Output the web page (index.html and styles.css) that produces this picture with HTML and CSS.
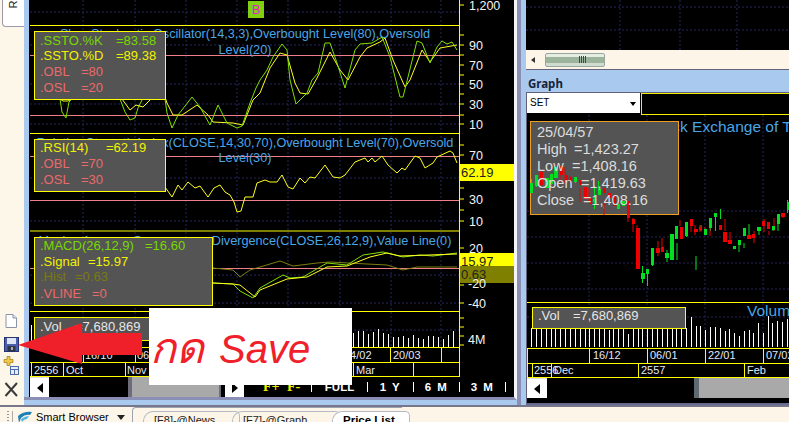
FILE: index.html
```html
<!DOCTYPE html>
<html lang="th">
<head>
<meta charset="utf-8">
<title>Smart Portal</title>
<link rel="stylesheet" href="styles.css">
</head>
<body>
<div class="app">
  <div class="main">
    <aside class="toolbar">
      <div class="side-tab"><span>R</span></div>
      <div class="tools">
        <svg class="tool" width="24" height="90" viewBox="0 0 24 90">
          <path d="M6 4.5H13L16.500 8V17.500H6Z" fill="#fff" stroke="#8a93a8"/>
          <path d="M13 4.500V8H16.500" fill="#dfe5f0" stroke="#8a93a8"/>
          <rect x="4.500" y="27.500" width="14" height="14" fill="#4a5fb0" stroke="#27336e"/>
          <rect x="7" y="28" width="9" height="6" fill="#dfe4f4"/>
          <rect x="7.500" y="36" width="8" height="5" fill="#30363f"/>
          <rect x="11" y="37" width="2" height="3" fill="#aab"/>
          <path d="M4 49.500h3v-3h3v3h3v3h-3v3h-3v-3h-3z" fill="#f2c84a" stroke="#a07a10" stroke-width=".7"/>
          <rect x="10.500" y="56.500" width="8" height="8" fill="#e8eef8" stroke="#4c6da8"/>
          <path d="M11 59.500h7M14.500 60v4" stroke="#4c6da8"/>
          <path d="M5.500 73L17 86M17 73L5.500 86" stroke="#3a3a3a" stroke-width="2"/>
        </svg>
      </div>
    </aside>

    <section class="window-left">
      <svg class="chart-left" viewBox="30 0 484 377" width="484" height="377">
        <g class="grid">
          <path d="M83 0V347M135 0V347M186 0V347M237 0V347M288 0V347M340 0V347M391 0V347M441 0V347"/>
          <path d="M30 12H459M30 45H459M30 84H459M30 104H459M30 124H459M30 178H459M30 221H459M30 275H459M30 303H459M30 330H459"/>
        </g>
        <rect class="signal" x="248" y="1" width="16" height="17"/>
        <text class="signal-b" x="256" y="14">B</text>

        <path class="ax" d="M30 25.500H459M30 133.500H459M30 231H459M30 311.500H459M30 347.500H459M30 362.500H459M30 376.500H459"/>
        <path class="ax" d="M459.500 0V377M83.500 347V362M135.500 347V362M186.500 347V362M237.500 347V362M288.500 347V362M340.500 347V362M390.500 347V362M441.500 347V362M31.500 362V377M63.500 362V377M125.500 362V377M353.500 362V377M413.500 362V377"/>
        <path class="ax" d="M459 5h5M459 35h5M459 45h5M459 55h5M459 65h5M459 75h5M459 84h5M459 94h5M459 104h5M459 115h5M459 124h5M459 145h5M459 155h5M459 166h5M459 177h5M459 188h5M459 199h5M459 210h5M459 221h5M459 248h5M459 285h5M459 303h5M459 318h5M459 327h5M459 336h5M459 345h5"/>

        <path class="pink" d="M30 55.500H459M30 115.500H459M30 156.500H459M30 200.500H459M30 268.500H459"/>

        <text class="title" x="245" y="38">Slow Stochastic Oscillator(14,3,3),Overbought Level(80),Oversold</text>
        <text class="title" x="245" y="54">Level(20)</text>
        <text class="title" x="245" y="147">Relative Strength Index(CLOSE,14,30,70),Overbought Level(70),Oversold</text>
        <text class="title" x="245" y="162">Level(30)</text>
        <text class="title" x="245" y="245">Moving Average Convergence Divergence(CLOSE,26,12,9),Value Line(0)</text>

        <polyline class="line-y" points="165,97 167,103 173,115 182,115 197,105 208,115 213,122 233,123 243,125 253,100 260,93 270,68 280,53 287,55 295,83 300,93 308,94 317,78 330,52 340,70 348,80 360,57 367,48 380,42 385,38 393,60 405,87 410,80 422,50 430,62 440,48 457,45"/>
        <polyline class="line-g" points="165,99 167,113 172,128 178,115 192,97 200,107 210,125 218,105 227,123 237,128 242,126 250,103 256,88 260,80 267,70 273,57 282,44 287,50 290,80 296,104 307,93 312,80 318,73 325,43 330,43 337,63 345,88 355,50 360,44 372,43 382,37 390,57 400,97 403,97 417,41 422,43 430,63 437,47 442,41 447,44 452,42 457,50"/>
        <polyline class="line-y" points="60,99 63,101 68,101 72,99"/>
        <polyline class="line-g" points="60,99 62,112 66,118 69,102 72,99"/>
        <polyline class="line-g" points="120,99 125,112 130,120 135,118 138,108 142,100"/>
        <polyline class="line-y" points="122,99 130,110 136,105 143,107 150,100"/>

        <polyline class="line-y" points="165,187 172,197 178,185 182,190 188,182 195,188 200,186 208,197 214,188 220,185 225,192 230,195 234,202 237,212 241,211 245,197 253,197 257,183 265,180 270,182 277,182 282,175 288,187 293,189 300,178 305,183 310,177 315,178 325,165 333,177 340,178 345,175 355,162 365,158 368,162 372,158 375,162 382,156 388,165 397,173 402,168 405,170 415,156 420,158 425,168 433,163 437,157 450,151 453,153 457,163"/>

        <polyline class="line-o" points="213,268 233,270 240,277 250,270 260,267 280,261 293,266 317,263 330,262 367,264 387,265 403,270 417,267 437,267 457,267"/>
        <polyline class="line-g" points="213,283 233,284 240,291 253,298 260,288 283,275 290,278 303,277 327,263 347,265 363,255 383,252 403,257 420,255 433,256 457,253"/>
        <polyline class="line-y" points="213,283 233,284 240,285 255,297 260,290 287,279 307,277 327,267 347,266 370,257 387,253 400,256 457,254"/>

        <path class="bars" d="M353.500 347V333M358.500 347V331M363.500 347V331M368.500 347V334M373.500 347V332M378.500 347V329M383.500 347V333M388.500 347V334M393.500 347V337M398.500 347V337M403.500 347V336M408.500 347V338M413.500 347V335M418.500 347V338M423.500 347V339M428.500 347V336M433.500 347V336M438.500 347V337M443.500 347V339M448.500 347V335M453.500 347V331"/>
        <path class="bars" d="M31.500 347V325"/>

        <rect class="price-y" x="460" y="164" width="54" height="17"/>
        <rect class="price-y" x="460" y="253" width="54" height="13"/>
        <rect class="price-o" x="460" y="266" width="54" height="17"/>
        <g class="axis-num">
          <text x="469" y="10">1,200</text>
          <text x="469" y="50">90</text><text x="469" y="70">70</text><text x="469" y="89">50</text>
          <text x="469" y="109">30</text><text x="469" y="129">10</text><text x="469" y="160">70</text>
          <text x="469" y="204">30</text><text x="469" y="226">10</text><text x="469" y="253">20</text>
          <text x="468" y="288">-20</text><text x="468" y="308">-40</text><text x="468" y="344">4M</text>
        </g>
        <g class="axis-dark">
          <text x="461" y="177">62.19</text><text x="461" y="266">15.97</text><text x="461" y="279">0.63</text>
        </g>

        <g class="x-labels">
          <text x="85" y="359">16/10</text><text x="137" y="359">06/11</text>
          <text x="344" y="359">04/02</text><text x="393" y="359">20/03</text>
          <text x="34" y="374">2556</text><text x="66" y="374">Oct</text><text x="127" y="374">Nov</text><text x="356" y="374">Mar</text>
        </g>

        <g class="tip">
          <rect x="34.500" y="31.500" width="131" height="68"/>
          <text class="c-g" x="40" y="45">.SSTO.%K</text><text class="c-g" x="116" y="45">=83.58</text>
          <text class="c-y" x="40" y="60">.SSTO.%D</text><text class="c-y" x="116" y="60">=89.38</text>
          <text class="c-r" x="40" y="76">.OBL</text><text class="c-r" x="81" y="76">=80</text>
          <text class="c-r" x="40" y="92">.OSL</text><text class="c-r" x="81" y="92">=20</text>
        </g>
        <g class="tip">
          <rect x="34.500" y="139.500" width="131" height="52"/>
          <text class="c-y" x="40" y="152">.RSI(14)</text><text class="c-y" x="106" y="152">=62.19</text>
          <text class="c-r" x="40" y="168">.OBL</text><text class="c-r" x="81" y="168">=70</text>
          <text class="c-r" x="40" y="184">.OSL</text><text class="c-r" x="81" y="184">=30</text>
        </g>
        <g class="tip">
          <rect x="34.500" y="237.500" width="178" height="68"/>
          <text class="c-g" x="40" y="250">.MACD(26,12,9)</text><text class="c-g" x="145" y="250">=16.60</text>
          <text class="c-y" x="40" y="266">.Signal</text><text class="c-y" x="88" y="266">=15.97</text>
          <text class="c-o" x="40" y="281">.Hist</text><text class="c-o" x="75" y="281">=0.63</text>
          <text class="c-r" x="40" y="298">.VLINE</text><text class="c-r" x="92" y="298">=0</text>
        </g>
        <g class="tip">
          <rect x="34.500" y="317.500" width="131" height="23"/>
          <text class="c-w" x="40" y="331">.Vol</text><text class="c-w" x="75" y="331">=7,680,869</text>
        </g>
      </svg>
      <div class="scroll-left">
        <span class="sb-btn"><i class="arrow-l"></i></span>
        <span class="sb-track"></span>
        <span class="sb-thumb"></span>
        <span class="sb-gap"></span>
        <span class="sb-btn"><i class="arrow-r"></i></span>
        <nav class="range">
          <b class="zoom">F+</b><b class="zoom">F-</b><u></u>
          <span class="range-full">FULL</span><u></u><span>1 Y</span><u></u><span>6 M</span><u></u><span>3 M</span><u></u>
        </nav>
      </div>
    </section>

    <section class="col-right">
      <div class="win-top">
        <svg class="top-grid" viewBox="526 0 263 50" width="263" height="50">
          <g class="grid"><path d="M620 0V50M680 0V50M737 0V50M526 7H789M526 30H789"/></g>
        </svg>
        <div class="scroll-top">
          <i class="arrow-small"></i>
          <span class="thumb-top"><em></em></span>
        </div>
      </div>
      <div class="win-graph">
        <h2 class="graph-title">Graph</h2>
        <div class="graph-frame">
          <div class="graph-head">
            <div class="combo">SET<i></i></div>
            <div class="graph-empty"></div>
          </div>
          <svg class="chart-right" viewBox="527 115 262 263" width="262" height="263">
            <g class="grid">
              <path d="M589 115V347M647 115V347M705 115V347M763 115V347"/>
              <path d="M527 211H789M527 237H789M527 263H789M527 289H789M527 317H789"/>
            </g>
            <text class="title-big" x="618" y="132">The Stock Exchange of Thailand</text>
            <text class="title-big" x="747" y="316">Volume</text>
            <g class="tip tip-or">
              <rect x="530.500" y="121.500" width="148" height="93"/>
            </g>
            <path class="wick-g" d="M531.500 179V193M536.500 175V187M546.500 178V188M551.500 174V185M555.500 167V178M575.500 177V183M594.500 186V209M598.500 181V191M603.500 206V209M642.500 266V283M647.500 269V286M652.500 248V266M667 250V262M677 243V260M686.500 223V237M696 256V270M701 225V231M710.500 226V231M715.500 215V231M720.500 209V219M739 243V252M744 243V248M749 224V237M759 228V235M773 227V231M778 223V231M787.500 200V213"/>
            <path class="wick-r" d="M541 170V186M561 172V182M565 167V183M570 176V183M580 188V202M589 188V202M604 200V215M628 201V222M633 218V232M637 225V235M658 241V256M662 238V252M680 220V226M691 219V232M695 225V235M700 225V232M705 227V232M710 220V236M725 219V231M730 232V242M754 231V243M764 219V232M769 231V235M774 218V231M783 214V218"/>
            <g class="up">
              <rect x="530" y="183" width="3" height="10"/><rect x="535" y="175" width="3" height="11"/><rect x="545" y="178" width="4" height="10"/><rect x="550" y="174" width="3" height="10"/><rect x="554" y="167" width="4" height="11"/><rect x="574" y="177" width="3" height="5"/><rect x="593" y="199" width="3" height="3"/><rect x="598" y="189" width="3" height="6"/>
              <rect x="617" y="204" width="3" height="5"/><rect x="622" y="201" width="3" height="5"/>
              <rect x="641" y="273" width="4" height="6"/><rect x="646" y="269" width="3" height="5"/><rect x="651" y="248" width="3" height="17"/><rect x="665" y="253" width="4" height="5"/><rect x="670" y="234" width="4" height="26"/><rect x="675" y="226" width="3" height="13"/><rect x="685" y="222" width="3" height="14"/><rect x="704" y="229" width="3" height="6"/><rect x="709" y="218" width="3" height="10"/><rect x="714" y="213" width="3" height="4"/><rect x="733" y="246" width="3" height="3"/><rect x="738" y="240" width="3" height="5"/><rect x="743" y="228" width="3" height="8"/><rect x="757" y="227" width="4" height="4"/><rect x="772" y="226" width="3" height="4"/><rect x="777" y="214" width="3" height="10"/><rect x="787" y="202" width="2" height="8"/>
            </g>
            <g class="down">
              <rect x="540" y="172" width="3" height="13"/><rect x="560" y="166" width="3" height="9"/><rect x="565" y="175" width="3" height="7"/><rect x="569" y="177" width="3" height="5"/><rect x="579" y="180" width="3" height="5"/><rect x="584" y="187" width="3" height="12"/><rect x="589" y="198" width="3" height="6"/><rect x="603" y="188" width="3" height="5"/><rect x="608" y="193" width="3" height="5"/><rect x="613" y="195" width="3" height="11"/><rect x="627" y="201" width="3" height="17"/><rect x="632" y="219" width="3" height="5"/><rect x="636" y="228" width="4" height="41"/>
              <rect x="656" y="248" width="4" height="5"/><rect x="661" y="247" width="3" height="5"/><rect x="680" y="227" width="3" height="12"/><rect x="690" y="219" width="3" height="7"/><rect x="694" y="229" width="4" height="3"/><rect x="699" y="227" width="3" height="3"/><rect x="719" y="225" width="3" height="5"/><rect x="723" y="232" width="4" height="10"/><rect x="728" y="240" width="4" height="4"/><rect x="747" y="235" width="4" height="4"/><rect x="752" y="234" width="3" height="4"/><rect x="762" y="221" width="3" height="5"/><rect x="767" y="222" width="3" height="7"/><rect x="781" y="213" width="4" height="4"/>
            </g>
            <g class="tip-text">
              <text x="537" y="137">25/04/57</text>
              <text x="537" y="154">High</text><text x="574" y="154">=1,423.27</text>
              <text x="537" y="171">Low</text><text x="572" y="171">=1,408.16</text>
              <text x="537" y="188">Open</text><text x="581" y="188">=1,419.63</text>
              <text x="537" y="205">Close</text><text x="583" y="205">=1,408.16</text>
            </g>
            <path class="ax" d="M527 302.500H789M527 348.500H789M527 363.500H789M527 377.500H789"/>
            <path class="ax" d="M589.500 348V363M647.500 348V363M705.500 348V363M763.500 348V363M527.500 348V378M532.500 363V378M551.500 363V378M638.500 363V378M744.500 363V378"/>
            <path class="bars" d="M531.500 347V328M536.500 347V328M541.500 347V328M546.500 347V328M551.500 347V328M555.500 347V328M560.500 347V328M565.500 347V328M570.500 347V328M575.500 347V328M580.500 347V328M585.500 347V328M589.500 347V328M594.500 347V328M599.500 347V328M604.500 347V328M609.500 347V330M613.500 347V328M618.500 347V328M623.500 347V328M628.500 347V334M633.500 347V328M638.500 347V328M642.500 347V328M647.500 347V328M652.500 347V328M657.500 347V328M662.500 347V328M667.500 347V328M672.500 347V328M676.500 347V328M681.500 347V328M686.500 347V328M691.500 347V317M696.500 347V326M700.500 347V326M705.500 347V330M710.500 347V327M715.500 347V327M720.500 347V328M725.500 347V331M729.500 347V329M734.500 347V333M739.500 347V336M744.500 347V331M749.500 347V330M753.500 347V333M758.500 347V323M763.500 347V333M768.500 347V316M772.500 347V323M777.500 347V321M782.500 347V322M787.500 347V319"/>
            <g class="x-labels">
              <text x="593" y="359">16/12</text><text x="650" y="359">06/01</text><text x="708" y="359">22/01</text><text x="766" y="359">07/02</text>
              <text x="534" y="374">2556</text><text x="554" y="374">Dec</text><text x="641" y="374">2557</text><text x="747" y="374">Feb</text>
            </g>
            <g class="tip">
              <rect x="532.500" y="307.500" width="153" height="21"/>
              <text class="c-w" x="538" y="320">.Vol</text><text class="c-w" x="573" y="320">=7,680,869</text>
            </g>
          </svg>
          <div class="scroll-right">
            <span class="sb-btn"><i class="arrow-l"></i></span>
            <span class="sb-track"></span>
            <span class="sb-thumb sb-thumb-right"></span>
          </div>
        </div>
      </div>
    </section>
  </div>

  <footer class="tabbar">
    <span class="grip"></span>
    <svg class="browser-icon" width="14" height="12" viewBox="0 0 14 12"><path d="M0 5Q6 0 14 1L12 4Q7 3 3 7L1 12Z" fill="#1f80b8"/><path d="M3 8Q7 5 11 5L9 8Q6 8 4 11Z" fill="#54b4dc"/></svg>
    <span class="browser-label">Smart Browser</span>
    <i class="caret"></i>
    <div class="tabs">
      <span class="tab tab-news">[F8]-@News</span>
      <span class="tab tab-graph">[F7]-@Graph</span>
      <span class="tab tab-active">Price List</span>
    </div>
  </footer>

  <svg class="callout-arrow" width="125" height="46" viewBox="0 0 125 46">
    <path d="M1 22L65 0V10H125V32H65V41Z" fill="#f0202a"/>
  </svg>
  <div class="callout"><span class="callout-th">กด</span>Save</div>
</div>
</body>
</html>
```

FILE: styles.css
```css
* { box-sizing: border-box; }
html, body { margin: 0; padding: 0; overflow: hidden; background: #fdf6e8; }
.app { position: relative; width: 789px; height: 422px; overflow: hidden; font-family: "Liberation Sans", Arial, sans-serif; }
.main { display: flex; height: 405px; background: #a9c9ef; }

.toolbar { width: 24px; background: #fdf7ea; display: flex; flex-direction: column; justify-content: space-between; flex: none; }
.side-tab { width: 22px; height: 27px; margin-left: 2px; background: #fff; border: 1px solid #9a9aa8; border-top: 0; border-right: 0; border-radius: 0 0 0 4px; display: flex; justify-content: center; }
.side-tab span { font-size: 11px; transform: rotate(-90deg); height: 13px; margin-top: -2px; color: #222; }
.tools { height: 95px; }
.tool { display: block; }

.window-left { width: 493px; flex: none; padding-left: 5px; border-right: 3px solid #f4f6fb; border-bottom: 3px solid #8a8fb4; background: linear-gradient(90deg, #a9c9ef 0 5px, #000 5px); height: 400px; }
.chart-left { display: block; margin-left: 1px; background: #000; }

.grid path { fill: none; stroke: #262660; stroke-dasharray: 2 2; }
.ax { fill: none; stroke: #ffff00; }
.pink { fill: none; stroke: #ef7f86; }
.line-y, .line-g, .line-o { fill: none; stroke-width: 1; }
.line-y { stroke: #ffff20; }
.line-g { stroke: #80e000; }
.line-o { stroke: #7d7d10; }
.bars { fill: none; stroke: #fff; }
.signal { fill: #80d010; }
.signal-b { fill: #e020d0; font-size: 13px; text-anchor: middle; }
.title { fill: #4aa6e6; font-size: 12.700px; text-anchor: middle; }
.title-big { fill: #4aa6e6; font-size: 15.500px; }
.axis-num text { fill: #f4f4f4; font-size: 12.500px; }
.axis-dark text { fill: #222; font-size: 13px; }
.price-y { fill: #ffff00; }
.price-o { fill: #7f7f00; }
.x-labels text { fill: #e4e8f8; font-size: 11px; }
.tip rect { fill: #545454; stroke: #ffff00; }
.tip-or rect { fill: #545454; stroke: #f0a020; }
.tip text { font-size: 13px; }
.tip-text text { fill: #dcdcdc; font-size: 14.500px; }
.c-g { fill: #78d800; }
.c-y { fill: #f2f200; }
.c-r { fill: #ea6a6a; }
.c-o { fill: #7a7a10; }
.c-w { fill: #e6e6e6; }
.up { fill: #00e020; }
.down { fill: #ee0000; }
.wick-g { fill: none; stroke: #00e020; }
.wick-r { fill: none; stroke: #ee0000; }

.scroll-left, .scroll-right { display: flex; height: 20px; background: #000; }
.scroll-left { margin-left: 1px; width: 484px; }
.sb-btn { width: 19px; flex: none; background: #fff; display: flex; align-items: center; justify-content: center; border-top: 1px solid #dcdcdc; }
.sb-track { width: 79px; flex: none; background: #000; }
.sb-thumb { width: 93px; flex: none; background: #a9a9a9; border-left: 4px solid #6d6d7a; border-right: 2px solid #6d6d7a; }
.sb-gap { width: 4px; flex: none; }
.arrow-l { border: 5px solid transparent; border-left: 0; border-right: 6px solid #000; }
.arrow-r { border: 5px solid transparent; border-right: 0; border-left: 6px solid #000; }
.range { display: flex; align-items: center; margin-left: 19px; color: #fff; font: bold 12px "Liberation Sans", sans-serif; letter-spacing: 1.500px; }
.range .zoom { font-family: "Liberation Serif", serif; color: #f0f000; font-size: 14px; letter-spacing: 0; width: 24px; }
.range u { width: 1px; height: 10px; background: #fff; text-decoration: none; }
.range span { width: 45px; text-align: center; white-space: pre; font-size: 11.500px; }
.range .range-full { width: 55px; letter-spacing: 0; }

.col-right { flex: 1; min-width: 0; border-left: 4px solid #8a8fb4; padding-left: 5px; height: 405px; display: flex; flex-direction: column; background: #a9c9ef; }
.win-top { height: 70px; flex: none; border-bottom: 1px solid #62627a; background: #000; }
.top-grid { display: block; }
.scroll-top { height: 19px; background: #fdf6e8; display: flex; align-items: center; padding-left: 5px; }
.arrow-small { border: 3px solid transparent; border-left: 0; border-right: 4px solid #333; margin-right: 10px; }
.thumb-top { width: 60px; height: 14px; background: linear-gradient(#e6eee4 0 25%, #9cb49c 25% 75%, #d0dccf 75%); border: 1px solid #99a6a0; border-radius: 2px; display: flex; justify-content: center; }
.thumb-top em { width: 7px; height: 7px; margin: 2px 0 0 14px; background: repeating-linear-gradient(90deg, #444 0 1px, transparent 1px 2px); }
.win-graph { flex: 1; display: flex; flex-direction: column; padding-top: 5px; }
.graph-title { margin: 0; height: 17px; font: bold 11.500px "Noto Sans", sans-serif; color: #15233c; line-height: 17px; padding-left: 2px; }
.graph-frame { flex: 1; border: 1px solid #62627a; border-right: 0; border-bottom: 2px solid #6a6a90; background: #000; }
.graph-head { display: flex; height: 22px; background: #000; }
.combo { width: 113px; height: 20px; background: #fff; font-size: 10px; line-height: 20px; padding-left: 3px; position: relative; color: #000; }
.combo i { position: absolute; right: 4px; top: 9px; border: 3px solid transparent; border-bottom: 0; border-top: 4px solid #000; }
.graph-empty { flex: 1; margin-left: 1px; border: 1px solid #f0f000; border-right: 0; }
.chart-right { display: block; background: #000; }
.sb-thumb-right { width: 95px; flex: none; background: #a9a9a9; border-left: 5px solid #5f6a70; border-right: 0; }
.scroll-right .sb-btn { width: 20px; }
.scroll-right .sb-track { width: 98px; }
.scroll-right .sb-thumb-right { margin-left: 49px; }

.tabbar { height: 17px; display: flex; align-items: flex-start; background: #fdf6e8; border-top: 2px solid #77778c; padding: 4px 0 0 7px; position: relative; }
.grip { width: 6px; height: 14px; border-right: 1px solid #aaa; margin-right: 5px; background: repeating-linear-gradient(#999 0 1px, transparent 1px 3px) 0 0 / 2px 100% no-repeat; }
.browser-icon { margin-right: 4px; flex: none; }
.browser-label { font: 11px "Liberation Sans", sans-serif; color: #000; width: 78px; white-space: nowrap; margin-top: 0; }
.caret { border: 4px solid transparent; border-bottom: 0; border-top: 5px solid #222; margin: 4px 7px 0 3px; }
.tabs { display: flex; margin-top: -4px; height: 18px; border-top: 1px solid #9aa2b4; border-left: 1px solid #9aa2b4; border-radius: 4px 0 0 0; flex: none; padding: 3px 0 0 10px; }
.tab { font: 11px "Liberation Sans", sans-serif; color: #222; height: 15px; padding: 2px 0 0 10px; border: 1px solid #b4bac8; border-bottom: 0; border-radius: 10px 5px 0 0; margin-right: -8px; white-space: nowrap; }
.tab-news { width: 97px; }
.tab-graph { width: 108px; }
.tab-active { font-weight: bold; font-size: 11.500px; color: #000; width: 78px; background: #fff; }

.callout { position: absolute; left: 149px; top: 308px; width: 203px; height: 77px; background: #fff; color: #f0202a; font: italic 40px "Liberation Sans", "Noto Sans", "DejaVu Sans", sans-serif; line-height: 80px; padding-left: 1px; white-space: nowrap; }
.callout-th { font-size: 43px; margin-right: 15px; }
.callout-arrow { position: absolute; left: 17px; top: 323px; z-index: 1; }
```
